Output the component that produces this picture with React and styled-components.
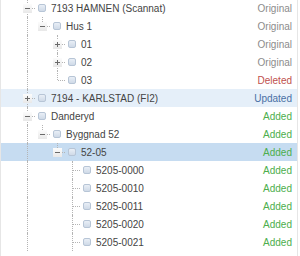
import React from "react";
import styled, { createGlobalStyle, css } from "styled-components";

const colors = {
  text: "#444",
  line: "#b4b4b4",
  original: "#8c8c8c",
  deleted: "#c0504d",
  updated: "#4a6fa5",
  added: "#4cae4c",
  hover: "#e5eff9",
  selected: "#c6dcf1",
};

const GlobalStyle = createGlobalStyle`
  body {
    margin: 0;
    background: #fff;
    font-family: "Liberation Sans", Arial, sans-serif;
  }
`;

const Panel = styled.div`
  width: 296px;
  height: 256px;
  overflow: hidden;
  border-left: 1px solid #e6e6e6;
  border-right: 1px solid #e6e6e6;
`;

const List = styled.div`
  margin-top: -1px;
  display: flex;
  flex-direction: column;
`;

const Row = styled.div`
  display: flex;
  align-items: center;
  height: 18px;
  padding: 0 5px 0 19px;
  font-size: 10px;
  color: ${colors.text};
  background: ${({ $tone }) =>
    $tone === "selected" ? colors.selected : $tone === "hover" ? colors.hover : "transparent"};
`;

const Guide = styled.div`
  position: relative;
  width: 15px;
  height: 100%;
  flex: none;

  ${({ $line }) =>
    $line &&
    css`
      &::before {
        content: "";
        position: absolute;
        left: 7px;
        top: 0;
        bottom: 0;
        border-left: 1px dotted ${colors.line};
      }
    `}
`;

const Connector = styled.div`
  position: relative;
  width: 15px;
  height: 100%;
  flex: none;

  &::before {
    content: "";
    position: absolute;
    left: 7px;
    top: 0;
    height: ${({ $next }) => ($next ? "18px" : "9px")};
    border-left: 1px dotted ${colors.line};
  }

  &::after {
    content: "";
    position: absolute;
    left: 8px;
    top: 9px;
    width: 7px;
    border-top: 1px dotted ${colors.line};
  }
`;

const Expander = styled.div`
  position: absolute;
  z-index: 1;
  left: 3px;
  top: 5px;
  width: 9px;
  height: 9px;
  box-sizing: border-box;
  background: linear-gradient(#fcfcfc, #e8e8e8);

  &::before {
    content: "";
    position: absolute;
    left: 2px;
    top: 4px;
    width: 5px;
    height: 1px;
    background: #6a6a6a;
  }

  ${({ $open }) =>
    !$open &&
    css`
      &::after {
        content: "";
        position: absolute;
        left: 4px;
        top: 2px;
        width: 1px;
        height: 5px;
        background: #6a6a6a;
      }
    `}
`;

const Checkbox = styled.span`
  width: 8px;
  height: 8px;
  box-sizing: border-box;
  margin: 0 5px 0 3px;
  flex: none;
  border: 1px solid #b7c5d6;
  border-radius: 2px;
  background: linear-gradient(#e9eff6, #cfdae7);
`;

const Label = styled.span`
  white-space: nowrap;
`;

const Status = styled.span`
  margin-left: auto;
  white-space: nowrap;
  color: ${({ $kind }) => colors[$kind]};
`;

const statusText = {
  original: "Original",
  deleted: "Deleted",
  updated: "Updated",
  added: "Added",
};

const leaves = ["5205-0000", "5205-0010", "5205-0011", "5205-0020", "5205-0021"].map(
  (label) => ({ label, status: "added" })
);

const tree = [
  {
    label: "7193 HAMNEN (Scannat)",
    status: "original",
    open: true,
    children: [
      {
        label: "Hus 1",
        status: "original",
        open: true,
        children: [
          { label: "01", status: "original", folder: true },
          { label: "02", status: "original", folder: true },
          { label: "03", status: "deleted" },
        ],
      },
    ],
  },
  { label: "7194 - KARLSTAD (FI2)", status: "updated", folder: true, tone: "hover" },
  {
    label: "Danderyd",
    status: "added",
    open: true,
    more: true,
    children: [
      {
        label: "Byggnad 52",
        status: "added",
        open: true,
        children: [
          {
            label: "52-05",
            status: "added",
            open: true,
            tone: "selected",
            children: leaves.map((l, i) => ({ ...l, more: i === leaves.length - 1 })),
          },
        ],
      },
    ],
  },
];

// walk the tree into flat rows, remembering which ancestor columns keep a line
const flatten = (nodes, guides = [], out = []) => {
  nodes.forEach((node, i) => {
    const next = i < nodes.length - 1 || !!node.more;
    out.push({ ...node, guides, next });
    if (node.open && node.children) flatten(node.children, [...guides, next], out);
  });
  return out;
};

const rows = flatten(tree);

const App = () => (
  <>
    <GlobalStyle />
    <Panel>
      <List>
        {rows.map((row) => (
          <Row key={row.label} $tone={row.tone}>
            {row.guides.map((line, i) => (
              <Guide key={i} $line={line} />
            ))}
            <Connector $next={row.next}>
              {(row.folder || row.children) && <Expander $open={row.open} />}
            </Connector>
            <Checkbox />
            <Label>{row.label}</Label>
            <Status $kind={row.status}>{statusText[row.status]}</Status>
          </Row>
        ))}
      </List>
    </Panel>
  </>
);

export default App;
